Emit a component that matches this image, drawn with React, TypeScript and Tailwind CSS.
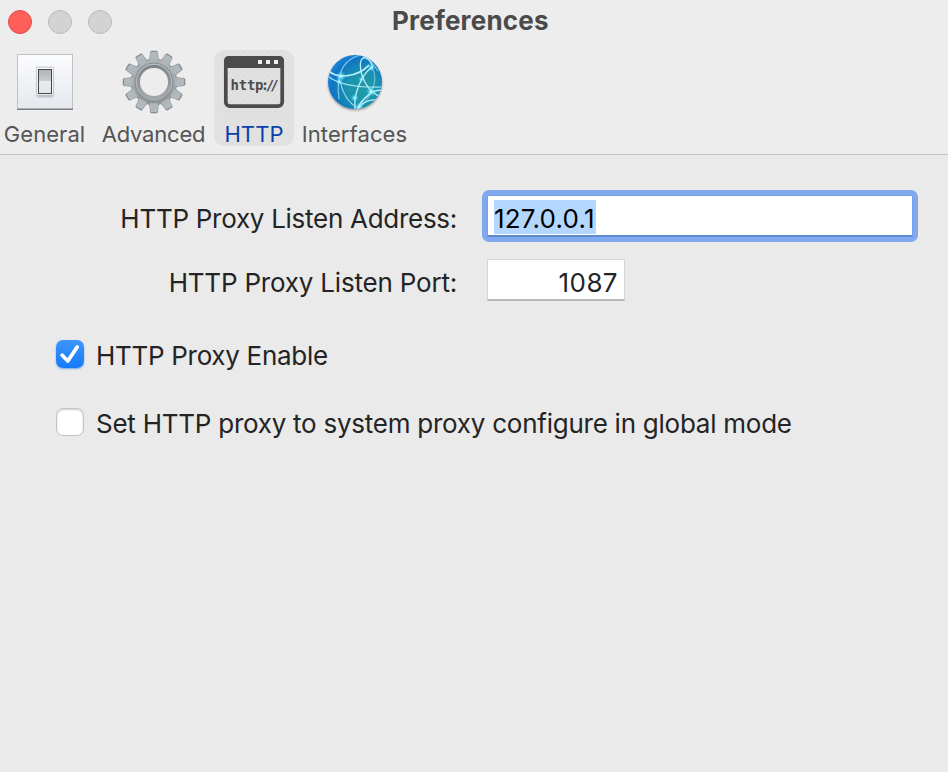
import type { ReactNode } from 'react';

const TEETH = [0, 30, 60, 90, 120, 150, 180, 210, 240, 270, 300, 330];

function GeneralIcon() {
  return (
    <svg width="60" height="64" viewBox="0 -1 60 64">
      <defs>
        <linearGradient id="plate" x1="0" y1="0" x2="0" y2="1">
          <stop offset="0" stopColor="#fbfcfe" />
          <stop offset="1" stopColor="#e4e8ed" />
        </linearGradient>
        <linearGradient id="rocker" x1="0" y1="0" x2="0" y2="1">
          <stop offset="0" stopColor="#aeb1b5" />
          <stop offset="0.46" stopColor="#c9cccf" />
          <stop offset="0.5" stopColor="#e8ebef" />
          <stop offset="1" stopColor="#e2e6eb" />
        </linearGradient>
        <filter id="soft"><feGaussianBlur stdDeviation="1" /></filter>
      </defs>
      <rect x="2.500" y="3.500" width="55" height="55" fill="url(#plate)" stroke="#bfc1c3" />
      <path d="M2 58.2H58" stroke="#777b80" strokeWidth="1.5" />
      <rect x="22" y="17" width="16" height="29" fill="#777" opacity=".5" filter="url(#soft)" />
      <rect x="21.700" y="16.200" width="16.600" height="28" rx="1" fill="#fdfdfd" stroke="#b5b5b5" strokeWidth=".7" />
      <rect x="23.500" y="18.500" width="13" height="24" fill="url(#rocker)" stroke="#424446" strokeWidth="1" />
    </svg>
  );
}

function GearIcon() {
  return (
    <svg width="66" height="66" viewBox="-33 -33 66 66">
      <defs>
        <linearGradient id="metal" gradientUnits="userSpaceOnUse" x1="0" y1="-31" x2="0" y2="31">
          <stop offset="0" stopColor="#b2bbbf" />
          <stop offset="0.5" stopColor="#a3a9ad" />
          <stop offset="1" stopColor="#85888b" />
        </linearGradient>
        <linearGradient id="bevel" gradientUnits="userSpaceOnUse" x1="0" y1="-18" x2="0" y2="18">
          <stop offset="0" stopColor="#7b8185" />
          <stop offset="1" stopColor="#a6abae" />
        </linearGradient>
        <mask id="hole" maskUnits="userSpaceOnUse" x="-33" y="-33" width="66" height="66">
          <rect x="-33" y="-33" width="66" height="66" fill="white" />
          <circle r="14" fill="black" />
        </mask>
        <g id="gearShape">
          <circle r="23" />
          {TEETH.map((a) => (
            <path key={a} transform={`rotate(${a})`} d="M-5 -22Q-3.900 -24 -3.700 -29.500Q-3.500 -31 -2.500 -31H2.500Q3.500 -31 3.700 -29.500Q3.900 -24 5 -22Z" />
          ))}
        </g>
      </defs>
      <g mask="url(#hole)">
        <use href="#gearShape" fill="#858a8e" stroke="#858a8e" strokeWidth=".5" />
        <g transform="scale(.965)"><use href="#gearShape" fill="url(#metal)" /></g>
        <circle r="18.800" fill="none" stroke="#8b9094" strokeWidth="1.200" />
        <circle r="17.800" fill="none" stroke="#b9bec1" strokeWidth=".8" />
        <circle r="15.500" fill="none" stroke="url(#bevel)" strokeWidth="3" />
      </g>
    </svg>
  );
}

function HttpIcon() {
  return (
    <svg width="64" height="64" viewBox="0 0 64 64">
      <defs>
        <pattern id="hatch" width="6" height="6" patternUnits="userSpaceOnUse">
          <path d="M-1 7L7 -1M-1 1L1 -1M5 7L7 5" stroke="#d6d6d6" strokeWidth=".7" />
        </pattern>
      </defs>
      <rect width="64" height="64" fill="url(#hatch)" />
      <rect x="3.800" y="7.800" width="56.400" height="48.400" rx="4" fill="none" stroke="#4b4b4b" strokeWidth="3.700" />
      <path d="M2 18V11Q2 6 7 6H57Q62 6 62 11V18Z" fill="#4b4b4b" />
      <path d="M36 10h4v4h-4zM44 10h4v4h-4zM52 10h4v4h-4z" fill="#f0f0f0" />
      <text y="40" fontFamily="'DejaVu Sans Mono', monospace" fontWeight="700" fontSize="14" fill="#4b4b4b">
        <tspan x="8.500 16.800 24.900 32.900 38.700 43.800 48.200">http://</tspan>
      </text>
    </svg>
  );
}

function GlobeIcon() {
  return (
    <svg width="66" height="66" viewBox="0 0 66 66">
      <defs>
        <radialGradient id="globe" cx=".64" cy=".62" r=".7">
          <stop offset="0" stopColor="#209aa4" />
          <stop offset=".4" stopColor="#1c93b0" />
          <stop offset=".8" stopColor="#0f74c4" />
          <stop offset="1" stopColor="#1f86d8" />
        </radialGradient>
        <radialGradient id="glow">
          <stop offset="0" stopColor="#fff" />
          <stop offset=".25" stopColor="#a5f2ff" stopOpacity=".75" />
          <stop offset="1" stopColor="#36d9ff" stopOpacity="0" />
        </radialGradient>
        <clipPath id="disc"><circle cx="33" cy="33" r="27" /></clipPath>
        <filter id="shade"><feGaussianBlur stdDeviation="1" /></filter>
      </defs>
      <circle cx="33" cy="34.500" r="27" fill="#666" opacity=".6" filter="url(#shade)" />
      <circle cx="33" cy="33" r="27" fill="url(#globe)" />
      <g clipPath="url(#disc)">
        <g transform="translate(0 -1) scale(.33333)">
          <g fill="none" stroke="#b8effa" strokeWidth="3.600" strokeLinecap="round">
            <path d="M22 70Q38 86 76 83Q116 78 140 52" strokeWidth="5" />
            <path d="M20 86Q65 120 180 117" opacity=".85" />
            <path d="M120 20Q36 38 51 152" opacity=".65" />
            <path d="M55 102Q66 158 112 184" opacity=".85" />
            <path d="M152 58Q143 28 127 29Q116 32 115 48Q114 82 137 116Q149 133 172 145" strokeWidth="4" />
            <path d="M148 59Q124 77 111 112Q96 147 99 182" strokeWidth="4" />
            <path d="M108 181Q114 162 138 142Q155 125 180 127" strokeWidth="5" />
            <path d="M150 58Q169 95 147 130Q138 158 112 180" opacity=".5" />
            <path d="M110 176Q134 153 168 155" />
            <path d="M125 29Q145 33 168 69" opacity=".6" />
          </g>
          <g fill="url(#glow)">
            <circle cx="57" cy="85" r="16" />
            <circle cx="52" cy="101" r="11" />
            <circle cx="118" cy="94" r="9" />
            <circle cx="148" cy="59" r="12" />
            <circle cx="147" cy="131" r="15" />
            <circle cx="98" cy="150" r="12" />
            <circle cx="112" cy="176" r="13" />
          </g>
        </g>
      </g>
    </svg>
  );
}

function ToolItem({ children, label, className, labelClass }: { children: ReactNode; label: string; className: string; labelClass: string }) {
  return (
    <button className={`flex h-24 shrink-0 flex-col items-center ${className}`}>
      <span className="flex h-16 w-full shrink-0 items-center justify-center">{children}</span>
      <span className={`mt-2 text-[22px] leading-6 whitespace-nowrap ${labelClass}`}>{label}</span>
    </button>
  );
}

export default function App() {
  return (
    <main className="h-[772px] w-[948px] overflow-hidden bg-[#eaeaea] font-['Inter','Liberation_Sans',sans-serif] text-[26px] leading-[32px] text-[#242424]">
      <header className="h-[155px] border-b border-[#c2c2c2] bg-[#ededed]">
        <div className="grid h-[50px] grid-cols-[385px_auto_1fr] pl-2">
          <div className="flex gap-4 pt-[10px]">
            <span className="size-6 rounded-full border border-[#e24b45] bg-[#fe5f58]" />
            <span className="size-6 rounded-full border border-[#bababa] bg-[#d3d3d3]" />
            <span className="size-6 rounded-full border border-[#bababa] bg-[#d3d3d3]" />
          </div>
          <h1 className="-ml-px pt-[5px] font-bold tracking-[0.2px] text-[#4a4a4a]">Preferences</h1>
          <div />
        </div>
        <nav className="flex">
          <ToolItem label="General" className="w-[89px]" labelClass="text-[#555] tracking-[0.05px]"><GeneralIcon /></ToolItem>
          <ToolItem label="Advanced" className="ml-1 w-[121px]" labelClass="text-[#555] tracking-[-0.2px]"><GearIcon /></ToolItem>
          <ToolItem label="HTTP" className="w-20 rounded-[10px] bg-[#e1e1e1]" labelClass="text-[#0b40a8] tracking-[0.1px]"><HttpIcon /></ToolItem>
          <ToolItem label="Interfaces" className="w-[121px]" labelClass="text-[#555] tracking-[0.1px]"><GlobeIcon /></ToolItem>
        </nav>
      </header>
      <section className="pt-[35px]">
        <div className="flex h-[52px]">
          <label className="w-[457px] pt-[13px] text-right tracking-[-0.28px]">HTTP Proxy Listen Address:</label>
          <div className="ml-[25px] h-[52px] w-[436px] rounded-[7px] bg-[#80aaed] p-[5px]">
            <div className="h-[42px] border border-b-2 border-[#74a0e8] border-b-[#5e8bd0] bg-white pt-[4px] pl-[6px]">
              <span className="block h-[34px] w-[102px] bg-[#b3d7ff] pt-[3px] tracking-[0.2px] text-black whitespace-nowrap">127.0.0.1</span>
            </div>
          </div>
        </div>
        <div className="mt-[17px] flex h-[42px]">
          <label className="w-[457px] pt-2 text-right tracking-[-0.2px]">HTTP Proxy Listen Port:</label>
          <div className="ml-[30px] w-[138px] border border-b-2 border-[#d5d5d5] border-b-[#b8b8b8] bg-white pt-[7px] pr-[6px] text-right tracking-[0.4px]">1087</div>
        </div>
        <div className="mt-[39px] ml-14 flex h-7">
          <span className="flex size-7 items-center justify-center rounded-[7px] bg-linear-to-b from-[#3b96fb] to-[#157afa] shadow-[0_1px_2px_#75a9e8]">
            <svg width="28" height="28" viewBox="0 0 28 28"><path d="M6.200 15.200L11.800 21L21.200 7" fill="none" stroke="white" strokeWidth="3.800" strokeLinecap="round" strokeLinejoin="round" /></svg>
          </span>
          <label className="ml-3 tracking-[-0.3px] whitespace-nowrap">HTTP Proxy Enable</label>
        </div>
        <div className="mt-10 ml-14 flex h-7">
          <span className="size-7 rounded-[7px] border border-[#c5c5c5] bg-white shadow-[inset_0_1px_2px_#ccc]" />
          <label className="ml-3 tracking-[-0.25px] whitespace-nowrap">Set HTTP proxy to system proxy configure in global mode</label>
        </div>
      </section>
    </main>
  );
}
